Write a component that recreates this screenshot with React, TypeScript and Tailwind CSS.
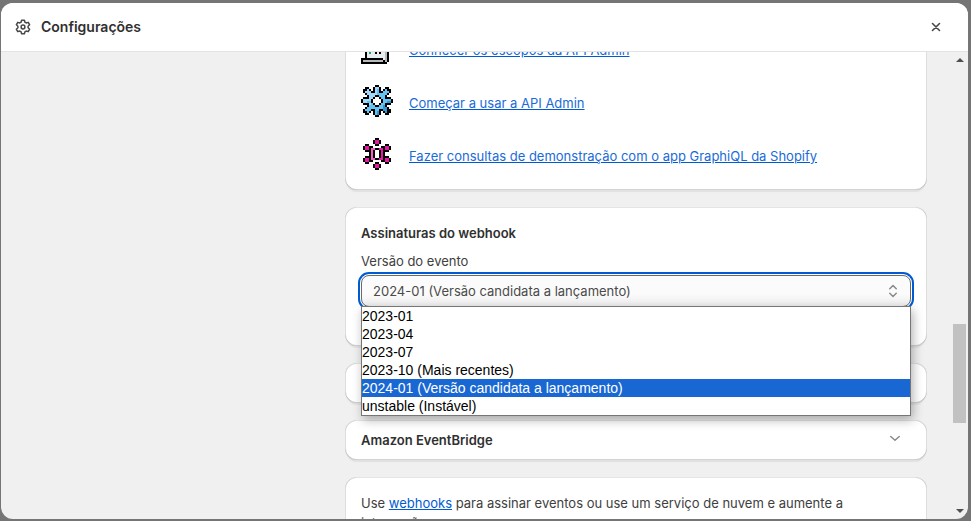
import { useState } from 'react';

const palette: Record<string, string> = {
    k: '#000000',
    w: '#ffffff',
    a: '#a0d9fb',
    b: '#66c2f2',
    c: '#3497d3',
    p: '#e519a5',
    q: '#f25fc6',
    g: '#b5babf',
    l: '#e9ecef',
    t: '#1fa37a',
};

const gear = [
    '.......kk.......',
    '..kk..kaak..kk..',
    '.kkak.kabk.kbkk.',
    '.kaaakkabkkbbbk.',
    '..kaaaaabbbbbk..',
    '...kaaakkbbbk...',
    '.kkkaakwwkbbkkk.',
    'kaaaakwwwwkbbbbk',
    'kaabbkwwwwkbbcck',
    '.kkkabkwwkbbkkk.',
    '...kbbbkkbbck...',
    '..kbbbbbbbbcck..',
    '.kbbbkkbbkkcckk.',
    '.kkbk.kbck.kckk.',
    '..kk..kbck..kk..',
    '.......kk.......',
];

const graph = [
    '.......kk.......',
    '......kppk......',
    '......kppk......',
    '..kk...kk...kk..',
    '.kppkkwwwwkkppk.',
    '.kppkqqkkppkppk.',
    '..kkkqkwwkpkkk..',
    '....kqkwwkpk....',
    '....kqkwwkpk....',
    '..kkkqkwwkpkkk..',
    '.kppkqqkkppkppk.',
    '.kppkkwwwwkkppk.',
    '..kk...kk...kk..',
    '......kppk......',
    '......kppk......',
    '.......kk.......',
];

const book = [
    '..kkkkkkkkkkkk..',
    '..klllllllllgk..',
    '..klllllllllgk..',
    '..klkkkklkklgk..',
    '..klllllllllgk..',
    '..klkklkkkllgk..',
    '..klllllllllgk..',
    '..klkkkklkklgk..',
    '..klllllllllgk..',
    '..kltllklkllgk..',
    '..kltllklkllgk..',
    '..klllllllllgk..',
    '..klllllllllgk..',
    'kkkkkkkkkkklgk..',
    'kggggggggggkgk..',
    'kkkkkkkkkkkkk...',
];

const PixelIcon = ({ rows }: { rows: string[] }) => (
    <svg viewBox="0 0 16 16" className="size-8 shrink-0" shapeRendering="crispEdges" aria-hidden="true">
        {rows.flatMap((row, y) =>
            row.split('').map((cell, x) =>
                palette[cell] ? <rect key={`${x}-${y}`} x={x} y={y} width="1" height="1" fill={palette[cell]} /> : null
            )
        )}
    </svg>
);

const resources = [
    { icon: book, title: 'Conhecer os escopos da API Admin' },
    { icon: gear, title: 'Começar a usar a API Admin' },
    { icon: graph, title: 'Fazer consultas de demonstração com o app GraphiQL da Shopify' },
];

const versions = [
    { value: '2023-01', label: '2023-01' },
    { value: '2023-04', label: '2023-04' },
    { value: '2023-07', label: '2023-07' },
    { value: '2023-10', label: '2023-10 (Mais recentes)' },
    { value: '2024-01', label: '2024-01 (Versão candidata a lançamento)' },
    { value: 'unstable', label: 'unstable (Instável)' },
];

const card =
    'rounded-xl bg-white px-4 shadow-[0_3px_1px_-1px_rgba(26,26,26,0.07),inset_1px_0_0_rgba(0,0,0,0.13),inset_-1px_0_0_rgba(0,0,0,0.13),inset_0_-1px_0_rgba(0,0,0,0.17),inset_0_1px_0_rgba(204,204,204,0.5)]';

const Header = () => (
    <header className="flex h-[49px] shrink-0 items-center border-b border-[#e3e3e3] bg-white px-3">
        <svg viewBox="0 0 20 20" className="size-5" fill="none" stroke="#4a4a4a" strokeWidth="1.5" strokeLinejoin="round" aria-hidden="true">
            <path d="M8.6 3.2h2.8l.5 2 1.3.75 2-.6 1.4 2.4-1.5 1.45v1.6l1.5 1.45-1.4 2.4-2-.6-1.3.75-.5 2H8.6l-.5-2-1.3-.75-2 .6-1.4-2.4 1.5-1.45V9.2L3.4 7.75l1.4-2.4 2 .6 1.3-.75z" />
            <circle cx="10" cy="10" r="1.9" />
        </svg>
        <h1 className="ml-2 flex-1 text-[14px] leading-5 font-semibold text-[#303030]">Configurações</h1>
        <button type="button" aria-label="Fechar" className="mr-2.5 flex size-5 items-center justify-center">
            <svg viewBox="0 0 20 20" className="size-5" fill="none" stroke="#4a4a4a" strokeWidth="1.6" strokeLinecap="round">
                <path d="M6.5 6.5l7 7M13.5 6.5l-7 7" />
            </svg>
        </button>
    </header>
);

const VersionField = () => {
    const [version, setVersion] = useState('2024-01');
    const [open, setOpen] = useState(true);

    return (
        <div className="mt-2 flex flex-col gap-1">
            <label htmlFor="version" className="text-[#404040]">Versão do evento</label>
            <div className="relative">
                <select
                    id="version"
                    value={version}
                    onChange={(e) => setVersion(e.target.value)}
                    className="block h-8 w-full appearance-none rounded-lg border border-[#6b6b6b] bg-linear-to-b from-[#fbfbfb] from-60% to-[#ededed] px-[11px] text-[13px] text-[#4a4a4a] outline-2 outline-offset-1 outline-[#005bd3]"
                >
                    {versions.map((v) => (
                        <option key={v.value} value={v.value}>{v.label}</option>
                    ))}
                </select>
                <svg viewBox="0 0 20 20" className="pointer-events-none absolute top-1.5 right-2 size-5" fill="none" stroke="#8a8a8a" strokeWidth="1.5" strokeLinecap="round" strokeLinejoin="round" aria-hidden="true">
                    <path d="M6.75 7.75L10 4.5l3.25 3.25M6.75 12.25L10 15.5l3.25-3.25" />
                </svg>
                {open && (
                    <ul
                        role="listbox"
                        aria-label="Versão do evento"
                        className="absolute top-full left-0 z-10 -mt-px w-full border border-[#767676] bg-white font-['Liberation_Sans',Arial,sans-serif] text-[14px] leading-[18px] text-black shadow-[2px_4px_10px_rgba(0,0,0,0.3)]"
                    >
                        {versions.map((v) => (
                            <li
                                key={v.value}
                                role="option"
                                aria-selected={v.value === version}
                                onClick={() => {
                                    setVersion(v.value);
                                    setOpen(false);
                                }}
                                className={v.value === version ? 'bg-[#1967d2] text-white' : ''}
                            >
                                {v.label}
                            </li>
                        ))}
                    </ul>
                )}
            </div>
        </div>
    );
};

const Scrollbar = () => (
    <div className="flex w-[17px] shrink-0 flex-col items-center py-1.5" aria-hidden="true">
        <div className="border-x-4 border-b-4 border-x-transparent border-b-[#4f4f4f]"></div>
        <div className="grow-[260]"></div>
        <div className="h-[99px] w-[13px] bg-[#c1c1c1]"></div>
        <div className="grow-[86]"></div>
        <div className="border-x-4 border-t-4 border-x-transparent border-t-[#4f4f4f]"></div>
    </div>
);

const App = () => {
    return (
        <div className="h-screen bg-[#757575] pt-[3px] pr-[3px] pb-[2px] pl-px font-[Inter,sans-serif] text-[13px] leading-5 text-[#303030]">
            <div className="flex h-full flex-col overflow-hidden rounded-xl bg-[#f0f0f0]">
                <Header />
                <div className="flex min-h-0 flex-1 overflow-hidden">
                    <div className="w-[344px] shrink-0"></div>
                    <main className="-mt-5 mr-6 flex min-w-0 flex-1 flex-col gap-[17px]">
                        <section className={card}>
                            <ul className="flex flex-col gap-[21px] pb-5">
                                {resources.map((item) => (
                                    <li key={item.title} className="flex items-center gap-4">
                                        <PixelIcon rows={item.icon} />
                                        <a href="#" className="mt-1 text-[#1a6bd8] underline decoration-[#005bd3]">{item.title}</a>
                                    </li>
                                ))}
                            </ul>
                        </section>

                        <section className={card}>
                            <div className="pt-4 pb-[39px]">
                                <h2 className="font-semibold">Assinaturas do webhook</h2>
                                <VersionField />
                            </div>
                        </section>

                        <section className={card}>
                            <div className="h-10"></div>
                        </section>

                        <section className={card}>
                            <button type="button" className="flex h-10 w-full items-center justify-between font-semibold">
                                Amazon EventBridge
                                <svg viewBox="0 0 20 20" className="mr-1.5 -mt-1 size-5" fill="none" stroke="#8a8a8a" strokeWidth="1.5" strokeLinecap="round" strokeLinejoin="round" aria-hidden="true">
                                    <path d="M5.75 8.5L10 12.25l4.25-3.75" />
                                </svg>
                            </button>
                        </section>

                        <section className={card}>
                            <p className="py-4 text-[#404040]">
                                Use <a href="#" className="text-[#005bd3] underline">webhooks</a> para assinar eventos ou use um serviço de nuvem e aumente a integração.
                            </p>
                        </section>
                    </main>
                    <Scrollbar />
                </div>
            </div>
        </div>
    );
};

export default App;
